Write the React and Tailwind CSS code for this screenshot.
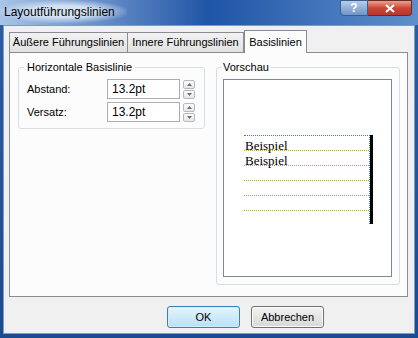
import React from 'react';

const ui = { fontFamily: '"Liberation Sans", Arial, sans-serif' };

const Spinner = () => (
    <div className="flex flex-col w-[12px] h-[19px] ml-[3px] gap-px">
        <div className="flex-1 flex items-center justify-center border border-[#b5b8bd] rounded-[2px] bg-gradient-to-b from-[#fbfbfb] to-[#e6e6e6]">
            <svg width="5" height="3" viewBox="0 0 5 3"><path d="M0 3 L2.5 0 L5 3 Z" fill="#6d6d6d" /></svg>
        </div>
        <div className="flex-1 flex items-center justify-center border border-[#b5b8bd] rounded-[2px] bg-gradient-to-b from-[#fbfbfb] to-[#e6e6e6]">
            <svg width="5" height="3" viewBox="0 0 5 3"><path d="M0 0 L2.5 3 L5 0 Z" fill="#6d6d6d" /></svg>
        </div>
    </div>
);

const Field = ({ label, value }) => (
    <div className="flex items-center h-[20px]">
        <span className="w-[88px] pl-[8px] text-black">{label}</span>
        <div className="w-[73px] h-[20px] border border-[#abadb3] bg-white flex items-center pl-[4px] text-[12px] text-black">
            {value}
        </div>
        <Spinner />
    </div>
);

const Row = ({ text }) => (
    <div className="h-[15px] shrink-0 border-b border-dotted border-[#c2a63e] font-['Liberation_Serif'] text-[13px] leading-[13px] text-black flex items-end pl-px">
        <span className="translate-y-[2px]">{text}</span>
    </div>
);

export default function App() {
    return (
        <div className="w-[418px] h-[338px] flex flex-col bg-gradient-to-b from-[#2d5da3] to-[#1c4a8e] overflow-hidden text-[11px]" style={ui}>
            {/* Title bar */}
            <div className="h-[25px] shrink-0 flex items-start bg-gradient-to-r from-[#a9c4e6] via-[#1f55a6] to-[#5e8fcb]">
                <div className="h-[23px] flex items-center pl-[4px] pr-[12px] text-[12px] text-black bg-[radial-gradient(ellipse_at_center,rgba(220,232,246,0.9)_35%,rgba(200,218,240,0)_75%)]">
                    Layoutführungslinien
                </div>
                <div className="flex-1" />
                <div className="flex mr-[6px] h-[16px]">
                    <div className="w-[28px] h-[16px] flex items-center justify-center rounded-bl-[4px] border border-[#3a5f8f] bg-gradient-to-b from-[#b6cde9] to-[#6e95c7] text-white text-[12px] font-bold">
                        ?
                    </div>
                    <div className="w-[44px] h-[16px] flex items-center justify-center rounded-br-[4px] border border-l-0 border-[#6a2a25] bg-gradient-to-b from-[#e8a090] via-[#cc4536] to-[#b9372b]">
                        <svg width="10" height="9" viewBox="0 0 10 9"><path d="M1 1 L9 8 M9 1 L1 8" stroke="#fff" strokeWidth="2.2" /></svg>
                    </div>
                </div>
            </div>

            {/* Client area */}
            <div className="flex-1 mx-[3px] mb-[4px] bg-[#f0f0f0] border border-[#7a9bc8] flex flex-col pl-[5px] pr-[6px]">
                {/* Tabs */}
                <div className="flex items-end h-[26px] text-black whitespace-nowrap">
                    <div className="h-[20px] w-[119px] flex items-center justify-center border border-b-0 border-[#898c95] bg-gradient-to-b from-[#f2f2f2] to-[#e1e1e1]">
                        Äußere Führungslinien
                    </div>
                    <div className="h-[20px] w-[116px] flex items-center justify-center border border-b-0 border-l-0 border-[#898c95] bg-gradient-to-b from-[#f2f2f2] to-[#e1e1e1]">
                        Innere Führungslinien
                    </div>
                    <div className="h-[23px] w-[63px] -mb-px flex items-start pt-[3px] justify-center border border-b-0 border-[#898c95] bg-[#fcfcfc] relative z-10">
                        Basislinien
                    </div>
                </div>

                {/* Tab panel */}
                <div className="h-[245px] border border-[#898c95] bg-[#fcfcfc] flex items-start pt-[8px] pl-[8px] text-black">
                    {/* Horizontale Basislinie */}
                    <fieldset className="w-[187px] h-[68px] border border-[#d5dfe5] rounded-[3px] p-0 m-0">
                        <legend className="ml-[5px] px-[3px] leading-[12px]">Horizontale Basislinie</legend>
                        <div className="flex flex-col gap-[3px] mt-[6px]">
                            <Field label="Abstand:" value="13.2pt" />
                            <Field label="Versatz:" value="13.2pt" />
                        </div>
                    </fieldset>

                    {/* Vorschau */}
                    <fieldset className="ml-[11px] w-[184px] h-[224px] border border-[#d5dfe5] rounded-[3px] p-0 m-0">
                        <legend className="ml-[4px] px-[2px] leading-[12px]">Vorschau</legend>
                        <div className="mt-[6px] ml-[6px] w-[169px] h-[198px] border border-[#828790] bg-white pl-[20px] pt-[55px]">
                            <div className="w-[129px] h-[89px] border-r-[3px] border-black">
                                <div className="h-full border-t border-r border-dotted border-[#3c7fd0] flex flex-col">
                                    <Row text="Beispiel" />
                                    <Row text="Beispiel" />
                                    <Row text="" />
                                    <Row text="" />
                                    <Row text="" />
                                </div>
                            </div>
                        </div>
                    </fieldset>
                </div>

                {/* Buttons */}
                <div className="flex gap-[11px] mt-[9px] ml-[158px] text-black">
                    <button className="w-[73px] h-[22px] rounded-[3px] border border-[#3c7fb1] bg-gradient-to-b from-[#e5f4fc] to-[#b9e0f5] shadow-[inset_0_0_0_1px_#cdeeff]">
                        OK
                    </button>
                    <button className="w-[73px] h-[22px] rounded-[3px] border border-[#707070] bg-gradient-to-b from-[#f2f2f2] to-[#d8d8d8] shadow-[inset_0_0_0_1px_#fcfcfc]">
                        Abbrechen
                    </button>
                </div>
            </div>
        </div>
    );
}
